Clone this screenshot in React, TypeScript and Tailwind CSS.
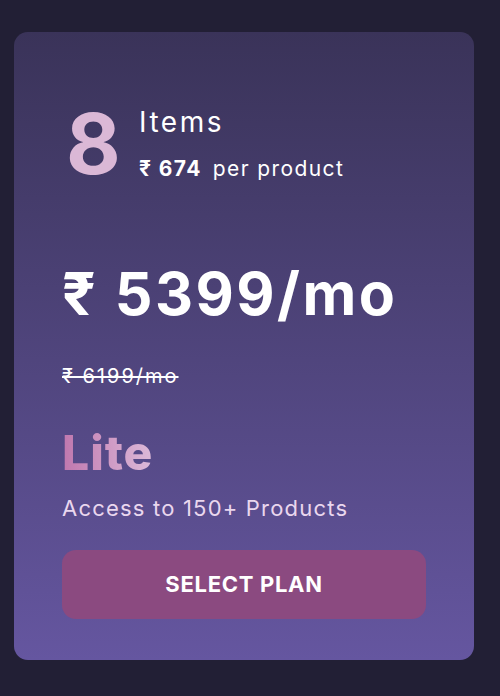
import React from "react";

export default function App() {
  return (
    <div className="min-h-[696px] w-[500px] bg-[#221f35] pt-[32px] pl-[14px]" style={{ fontFamily: "Inter, 'Noto Sans', sans-serif" }}>
      <div className="w-[460px] h-[628px] rounded-[14px] bg-gradient-to-b from-[#3a3359] to-[#6556a0] px-[48px] pt-[70px] flex flex-col">
        <div className="flex items-start">
          <div className="text-[84px] leading-[84px] font-bold text-[#dbb8d6] w-[73px] ml-[4px]">8</div>
          <div className="flex flex-col pt-[4px]">
            <div className="text-[28px] leading-[32px] text-white tracking-[2.5px]">Items</div>
            <div className="text-[21px] leading-[28px] text-white mt-[17px] tracking-[1.4px] whitespace-nowrap">
              <span className="font-bold">₹ 674</span>
              <span className="ml-[11px]">per product</span>
            </div>
          </div>
        </div>
        <div className="mt-[76px] text-[59px] leading-[64px] font-bold text-white tracking-[2.5px] whitespace-nowrap">₹ 5399/mo</div>
        <div className="mt-[38px] text-[20px] leading-[24px] text-white line-through tracking-[2px]">₹ 6199/mo</div>
        <div className="mt-[39px] text-[48px] leading-[52px] font-extrabold bg-gradient-to-r from-[#bf77ae] to-[#dcbad9] bg-clip-text text-transparent w-fit tracking-[1px]">Lite</div>
        <div className="mt-[15px] text-[22px] leading-[28px] text-[#ead7ee] tracking-[1.2px] whitespace-nowrap">Access to 150+ Products</div>
        <button className="mt-[28px] h-[69px] w-full rounded-[14px] bg-[#8b4a80] text-white text-[22px] font-bold tracking-[0.7px]">SELECT PLAN</button>
      </div>
    </div>
  );
}
